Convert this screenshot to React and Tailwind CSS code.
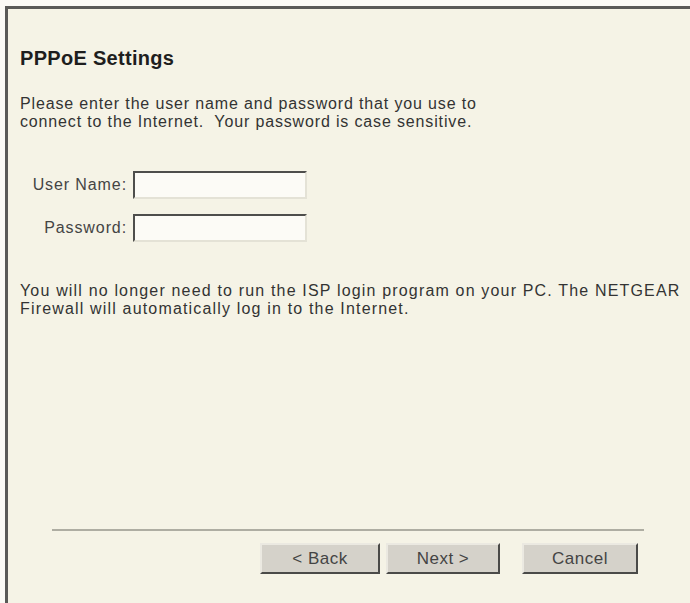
export default function App() {
  const font = { fontFamily: '"Liberation Sans", Arial, sans-serif' };
  const btn =
    "h-[31px] bg-[#d5d2ca] border-2 border-t-[#ebe9e1] border-l-[#ebe9e1] border-r-[#4a4a48] border-b-[#4a4a48] text-[17px] tracking-[0.5px] text-[#444]";
  const field =
    "w-[174px] h-[28px] bg-[#fcfbf6] border-2 border-t-[#4e4e4c] border-l-[#4e4e4c] border-r-[#e4e2d6] border-b-[#e4e2d6] outline-none";
  return (
    <div
      className="w-[690px] h-[603px] bg-[#fbfaf6] pl-[5px] pt-[6px] flex"
      style={font}
    >
      <div className="flex-1 flex flex-col bg-[#f5f3e6] border-l-[3px] border-t-[3px] border-[#5a5a58] pl-[12px]">
        <h1 className="mt-[37px] text-[20px] tracking-[0.3px] leading-[24px] font-bold text-[#1e1e1e]">
          PPPoE Settings
        </h1>

        <p className="mt-[25px] text-[16px] tracking-[0.85px] leading-[18px] text-[#333]">
          Please enter the user name and password that you use to
          <br />
          connect to the Internet.&nbsp; Your password is case sensitive.
        </p>

        <div className="mt-[40px] grid grid-cols-[107px_auto] justify-start items-center gap-x-[6px] gap-y-[15px]">
          <label className="text-[16px] tracking-[0.9px] text-right text-[#444]">User Name:</label>
          <input type="text" className={field} />
          <label className="text-[16px] tracking-[0.9px] text-right text-[#444]">Password:</label>
          <input type="password" className={field} />
        </div>

        <p className="mt-[40px] text-[16px] tracking-[1.17px] leading-[18px] text-[#333]">
          You will no longer need to run the ISP login program on your PC. The NETGEAR
          <br />
          Firewall will automatically log in to the Internet.
        </p>

        <div className="mt-auto mb-[29px] pl-[32px] pr-[46px]">
          <div className="h-[2px] bg-[#aeada2]" />
          <div className="mt-[12px] mr-[6px] flex justify-end">
            <button className={`w-[120px] ${btn}`}>&lt; Back</button>
            <button className={`ml-[6px] w-[114px] ${btn}`}>Next &gt;</button>
            <button className={`ml-[22px] w-[116px] ${btn}`}>Cancel</button>
          </div>
        </div>
      </div>
    </div>
  );
}
